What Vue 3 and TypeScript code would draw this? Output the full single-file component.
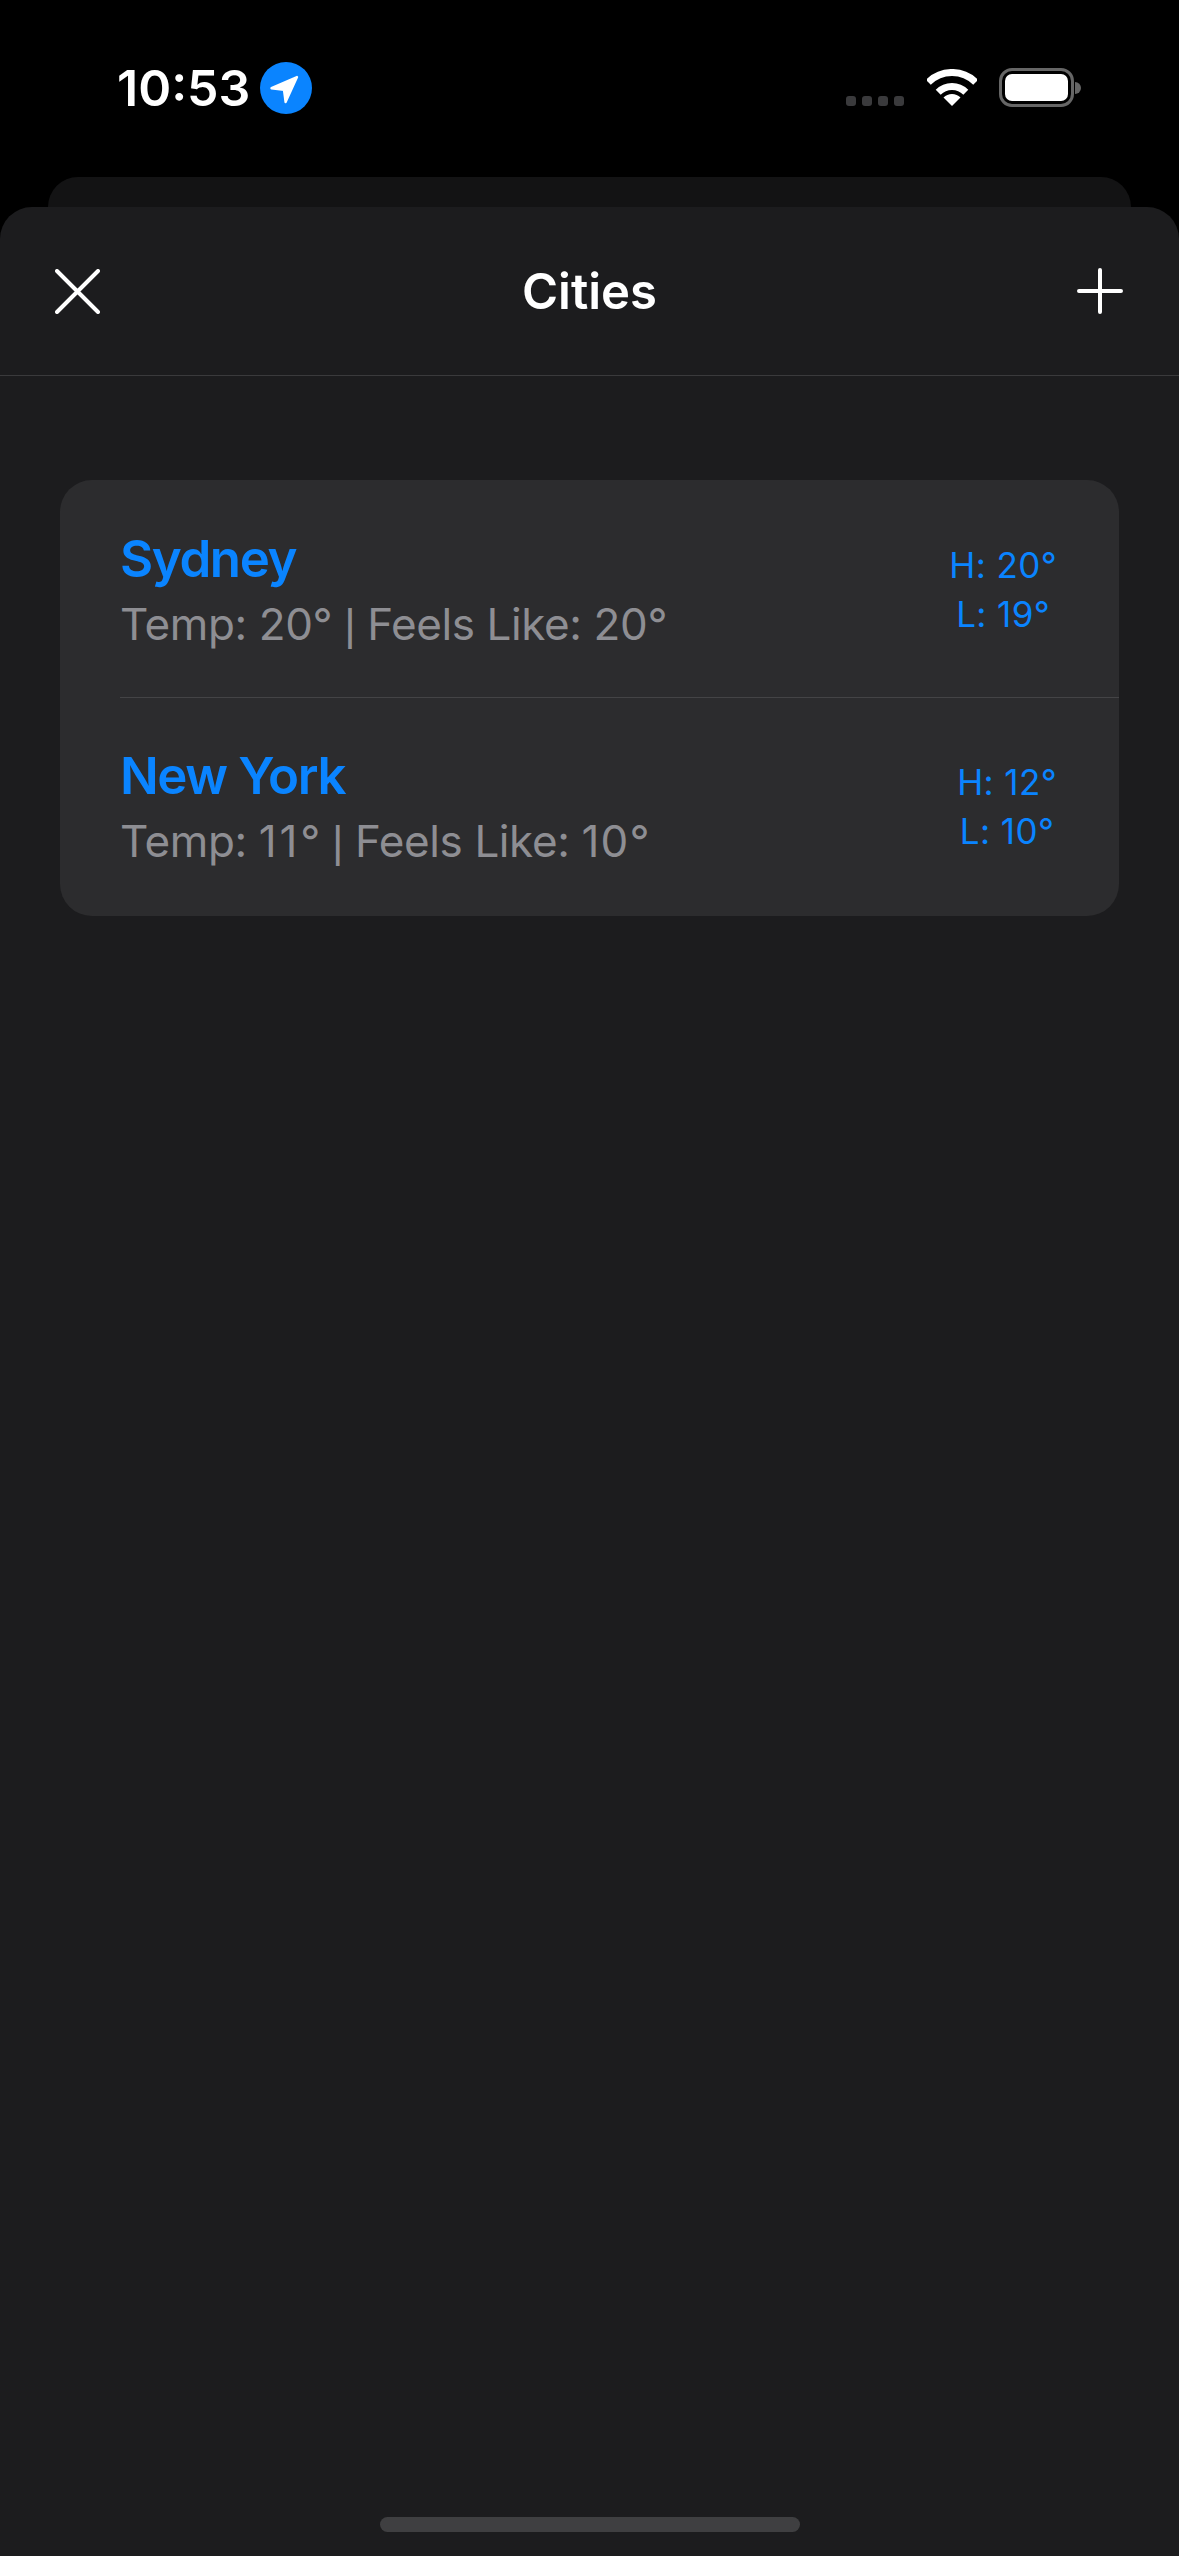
<script setup lang="ts">
interface City {
  name: string
  temp: number
  feels: number
  high: number
  low: number
}

const cities: City[] = [
  { name: 'Sydney', temp: 20, feels: 20, high: 20, low: 19 },
  { name: 'New York', temp: 11, feels: 10, high: 12, low: 10 },
]

// Inter's "1" is narrower than the reference face: widen numbers that contain it.
function digitSpacing(value: number): { letterSpacing: string } {
  const text = String(value)
  const ones = text.split('1').length - 1
  return { letterSpacing: `${(ones * 3.3) / text.length - 0.4}px` }
}
</script>

<template>
  <div class="screen">
    <header class="status">
      <div class="status-left">
        <span class="time">10:53</span>
        <svg class="loc" width="52" height="52" viewBox="0 0 52 52">
          <circle cx="26" cy="26" r="26" fill="#0A84FF" />
          <path d="M37 15 L11.5 26.2 L24 27.8 L25.6 40 Z" fill="#fff" stroke="#fff" stroke-width="2.4" stroke-linejoin="round" />
        </svg>
      </div>
      <div class="status-right">
        <div class="signal"><i></i><i></i><i></i><i></i></div>
        <svg class="wifi" width="50" height="37" viewBox="0 0 50 37" fill="none">
          <path d="M1.3 13.3 A33.5 33.5 0 0 1 48.7 13.3" stroke="#fff" stroke-width="7" />
          <path d="M11.2 23.2 A19.5 19.5 0 0 1 38.8 23.2" stroke="#fff" stroke-width="7" />
          <path d="M25 37 L16.5 28.5 A12 12 0 0 1 33.5 28.5 Z" fill="#fff" />
        </svg>
        <div class="battery">
          <div class="battery-body"><div class="battery-fill"></div></div>
          <div class="battery-cap"></div>
        </div>
      </div>
    </header>

    <div class="back-sheet"></div>

    <main class="sheet">
      <nav class="nav">
        <svg width="45" height="45" viewBox="0 0 45 45" fill="none" stroke="#fff" stroke-width="4" stroke-linecap="round">
          <path d="M2 2 L43 43 M43 2 L2 43" />
        </svg>
        <h1 class="title">Cities</h1>
        <svg width="46" height="46" viewBox="0 0 46 46" fill="none" stroke="#fff" stroke-width="4" stroke-linecap="round">
          <path d="M23 2 V44 M2 23 H44" />
        </svg>
      </nav>

      <section class="body">
        <div class="card">
          <article v-for="city in cities" :key="city.name" class="row">
            <div class="info">
              <div class="name">{{ city.name }}</div>
              <div class="detail">Temp: <span :style="digitSpacing(city.temp)">{{ city.temp }}</span>° <span class="pipe">|</span> Feels Like: <span :style="digitSpacing(city.feels)">{{ city.feels }}</span>°</div>
            </div>
            <div class="range">
              <div>H: {{ city.high }}°</div>
              <div>L: {{ city.low }}°</div>
            </div>
          </article>
        </div>
      </section>

      <div class="home-bar"></div>
    </main>
  </div>
</template>

<style>
html, body { margin: 0; background: #000; }
</style>

<style scoped>
.screen {
  width: 1179px;
  height: 2556px;
  display: flex;
  flex-direction: column;
  background: #000;
  color: #fff;
  font-family: Inter, "Liberation Sans", sans-serif;
  overflow: hidden;
}
.status {
  height: 177px;
  box-sizing: border-box;
  padding: 62px 98px 0 117px;
  display: flex;
  justify-content: space-between;
  align-items: flex-start;
}
.status-left {
  display: flex;
  align-items: center;
  gap: 10px;
}
.time {
  font-size: 50px;
  font-weight: 600;
  line-height: 52px;
}
.status-right {
  display: flex;
  align-items: flex-start;
  padding-top: 6px;
}
.signal {
  display: flex;
  gap: 6px;
  margin-top: 28px;
  margin-right: 23px;
}
.signal i {
  width: 10px;
  height: 10px;
  border-radius: 3px;
  background: #3a3a3c;
}
.wifi { margin-top: 1px; margin-right: 22px; }
.battery {
  display: flex;
  align-items: center;
  gap: 1px;
}
.battery-body {
  width: 75px;
  height: 39px;
  box-sizing: border-box;
  border: 3px solid #666;
  border-radius: 13px;
  padding: 3px;
}
.battery-fill {
  height: 100%;
  background: #fff;
  border-radius: 7px;
}
.battery-cap {
  width: 6px;
  height: 12px;
  background: #666;
  border-radius: 0 6px 6px 0;
}
.back-sheet {
  height: 30px;
  margin: 0 48px;
  background: #131314;
  border-radius: 30px 30px 0 0;
}
.sheet {
  flex: 1;
  display: flex;
  flex-direction: column;
  background: #1c1c1e;
  border-radius: 32px 32px 0 0;
}
.nav {
  height: 169px;
  box-sizing: border-box;
  padding: 0 56px 0 55px;
  display: flex;
  align-items: center;
  justify-content: space-between;
  border-bottom: 1px solid #3a3a3c;
}
.title {
  margin: 0 0 0 2px;
  font-size: 49px;
  font-weight: 600;
}
.body {
  flex: 1;
  padding: 104px 60px 0;
}
.card {
  background: #2c2c2e;
  border-radius: 32px;
  overflow: hidden;
}
.row {
  margin-left: 60px;
  height: 217px;
  box-sizing: border-box;
  padding: 48px 62px 0 0;
  display: flex;
  justify-content: space-between;
  align-items: flex-start;
}
.row + .row {
  height: 219px;
  padding-top: 47px;
  border-top: 1px solid #444446;
}
.name {
  font-size: 51px;
  font-weight: 600;
  line-height: 62px;
  letter-spacing: -1.4px;
  color: #0a84ff;
}
.detail {
  margin-top: 3px;
  font-size: 44px;
  line-height: 62px;
  letter-spacing: -0.4px;
  color: #8e8e93;
}
.pipe {
  font-family: "Liberation Sans", sans-serif;
  font-weight: 400;
}
.range {
  margin-top: 13px;
  font-size: 35px;
  line-height: 49px;
  letter-spacing: 0.4px;
  text-align: center;
  color: #0a84ff;
}
.home-bar {
  width: 420px;
  height: 15px;
  margin: 0 auto 24px;
  border-radius: 8px;
  background: #3f3f41;
}
</style>
